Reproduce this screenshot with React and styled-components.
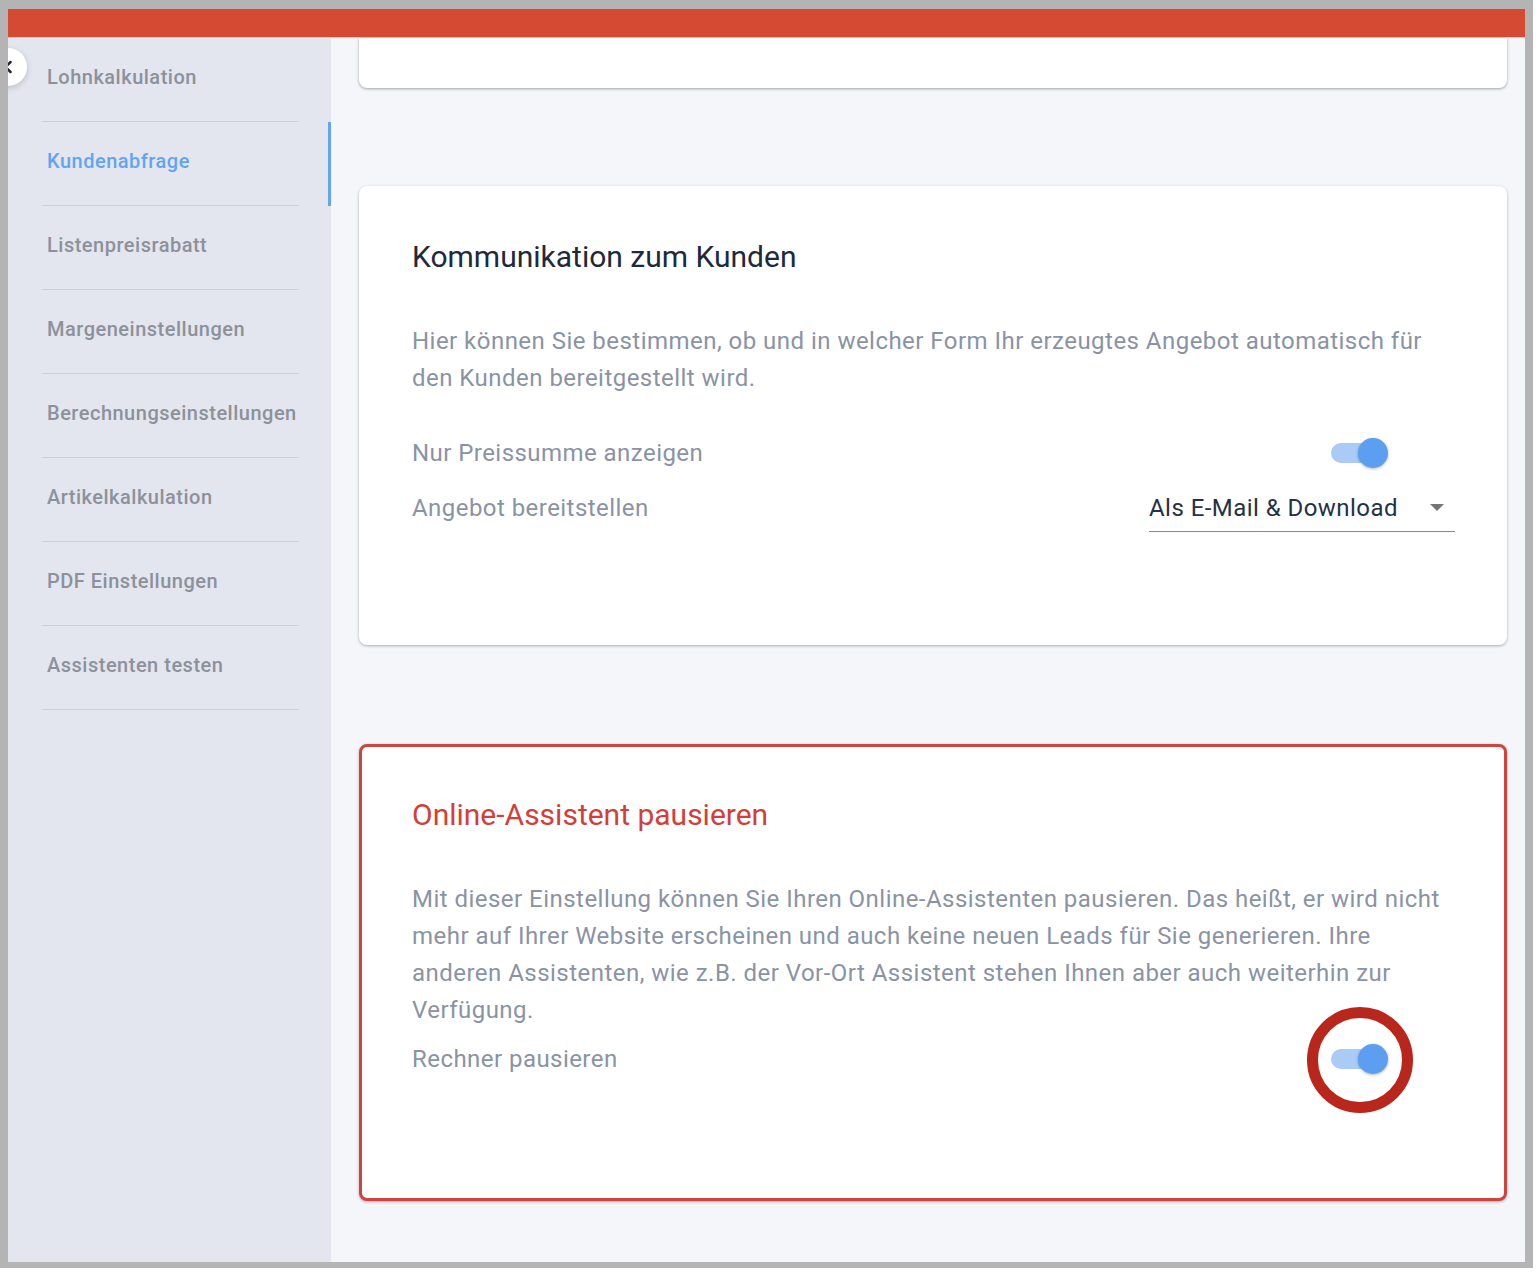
import React from "react";
import styled, { createGlobalStyle } from "styled-components";
import { ChevronLeft } from "lucide-react";

const navItems = [
  "Lohnkalkulation",
  "Kundenabfrage",
  "Listenpreisrabatt",
  "Margeneinstellungen",
  "Berechnungseinstellungen",
  "Artikelkalkulation",
  "PDF Einstellungen",
  "Assistenten testen",
];

function Toggle({ marked }) {
  return (
    <SwitchWrap>
      <Track>
        <Thumb />
        {marked && <Ring />}
      </Track>
    </SwitchWrap>
  );
}

function App() {
  return (
    <>
      <GlobalStyle />
      <Frame>
        <TopBar />
        <Body>
          <Sidebar>
            <BackButton>
              <ChevronLeft size={20} strokeWidth={3} color="#1d2433" />
            </BackButton>
            {navItems.map((item, i) => (
              <NavRow key={item} active={i === 1}>
                <NavLabel active={i === 1}>{item}</NavLabel>
              </NavRow>
            ))}
          </Sidebar>
          <Main>
            <CutCard />
            <Card>
              <Title>Kommunikation zum Kunden</Title>
              <Text>
                Hier können Sie bestimmen, ob und in welcher Form Ihr erzeugtes
                Angebot automatisch für den Kunden bereitgestellt wird.
              </Text>
              <Row space={28}>
                <Label>Nur Preissumme anzeigen</Label>
                <Toggle />
              </Row>
              <Row>
                <Label>Angebot bereitstellen</Label>
                <Select>
                  <span>Als E-Mail &amp; Download</span>
                  <Caret />
                </Select>
              </Row>
            </Card>
            <Card danger>
              <Title danger>Online-Assistent pausieren</Title>
              <Text>
                Mit dieser Einstellung können Sie Ihren Online-Assistenten
                pausieren. Das heißt, er wird nicht mehr auf Ihrer Website
                erscheinen und auch keine neuen Leads für Sie generieren. Ihre
                anderen Assistenten, wie z.B. der Vor-Ort Assistent stehen Ihnen
                aber auch weiterhin zur Verfügung.
              </Text>
              <Row space={2}>
                <Label>Rechner pausieren</Label>
                <Toggle marked />
              </Row>
            </Card>
          </Main>
        </Body>
      </Frame>
    </>
  );
}

export default App;

const GlobalStyle = createGlobalStyle`
  body {
    margin: 0;
    background: #fff;
    font-family: Roboto, "Liberation Sans", sans-serif;
  }
`;

const Frame = styled.div`
  box-sizing: border-box;
  width: 1533px;
  height: 1268px;
  border-style: solid;
  border-color: #b4b4b4;
  border-width: 9px 8px 6px 8px;
  display: flex;
  flex-direction: column;
  overflow: hidden;
`;

const TopBar = styled.div`
  height: 28px;
  flex-shrink: 0;
  background: #d54a32;
  border-bottom: 1px solid #cdd0e0;
`;

const Body = styled.div`
  flex: 1;
  display: flex;
  min-height: 0;
`;

const Sidebar = styled.nav`
  position: relative;
  width: 323px;
  flex-shrink: 0;
  background: #e3e6ef;
`;

const BackButton = styled.div`
  position: absolute;
  left: -19px;
  top: 10px;
  width: 38px;
  height: 38px;
  border-radius: 50%;
  background: #fff;
  box-shadow: 0 2px 6px rgba(0, 0, 0, 0.18);
  display: flex;
  align-items: center;
  justify-content: center;
  z-index: 2;
`;

const NavRow = styled.div`
  box-sizing: border-box;
  height: 84px;
  padding: 0 29px 0 34px;
  border-right: 3px solid ${(p) => (p.active ? "#63a4f0" : "transparent")};
`;

const NavLabel = styled.div`
  box-sizing: border-box;
  height: 84px;
  padding: 27px 0 0 5px;
  border-bottom: 1px solid #cbd0dc;
  font-size: 20px;
  line-height: 24px;
  font-weight: 500;
  letter-spacing: 0.5px;
  color: ${(p) => (p.active ? "#63a4f0" : "#8c919b")};
`;

const Main = styled.main`
  flex: 1;
  background: #f5f6fa;
  padding: 0 18px 0 28px;
  display: flex;
  flex-direction: column;
`;

const CutCard = styled.div`
  height: 50px;
  flex-shrink: 0;
  background: #fff;
  border-radius: 0 0 8px 8px;
  box-shadow: 0 1px 3px rgba(0, 0, 0, 0.35);
`;

const Card = styled.section`
  box-sizing: border-box;
  height: ${(p) => (p.danger ? 457 : 459)}px;
  margin-top: ${(p) => (p.danger ? 99 : 98)}px;
  flex-shrink: 0;
  background: #fff;
  border-radius: 8px;
  border: ${(p) => (p.danger ? "3px solid #d0443f" : "none")};
  box-shadow: 0 1px 3px rgba(0, 0, 0, 0.3);
  padding: ${(p) => (p.danger ? "51px 49px 0 50px" : "54px 52px 0 53px")};
`;

const Title = styled.h2`
  margin: 0;
  font-size: 30px;
  line-height: 34px;
  font-weight: 400;
  color: ${(p) => (p.danger ? "#d23f3a" : "#1e2a3b")};
`;

const Text = styled.p`
  margin: 49px 0 0;
  font-size: 24px;
  line-height: 37px;
  letter-spacing: 0.47px;
  color: #8a93a4;
`;

const Row = styled.div`
  display: flex;
  align-items: center;
  justify-content: space-between;
  height: 55px;
  margin-top: ${(p) => p.space || 0}px;
`;

const Label = styled.span`
  font-size: 24px;
  letter-spacing: 0.45px;
  color: #8a93a4;
`;

const SwitchWrap = styled.div`
  margin-right: 75px;
  display: flex;
  align-items: center;
`;

const Track = styled.span`
  position: relative;
  display: block;
  width: 49px;
  height: 20px;
  border-radius: 10px;
  background: #a9cbf5;
`;

const Thumb = styled.span`
  position: absolute;
  right: -8px;
  top: -5px;
  width: 30px;
  height: 30px;
  border-radius: 50%;
  background: #5c9ff0;
  box-shadow: 0 1px 3px rgba(0, 0, 0, 0.3);
`;

const Ring = styled.span`
  position: absolute;
  left: -24px;
  top: -42px;
  box-sizing: border-box;
  width: 106px;
  height: 106px;
  border-radius: 50%;
  border: 11px solid #b8261c;
`;

const Select = styled.div`
  box-sizing: border-box;
  width: 306px;
  margin-top: 9px;
  padding-bottom: 8px;
  border-bottom: 1px solid #8a8a8a;
  display: flex;
  align-items: center;
  justify-content: space-between;
  font-size: 24px;
  line-height: 30px;
  letter-spacing: 0.45px;
  color: #263244;
`;

const Caret = styled.span`
  width: 0;
  height: 0;
  margin-right: 11px;
  border-left: 7px solid transparent;
  border-right: 7px solid transparent;
  border-top: 7px solid #757575;
`;
